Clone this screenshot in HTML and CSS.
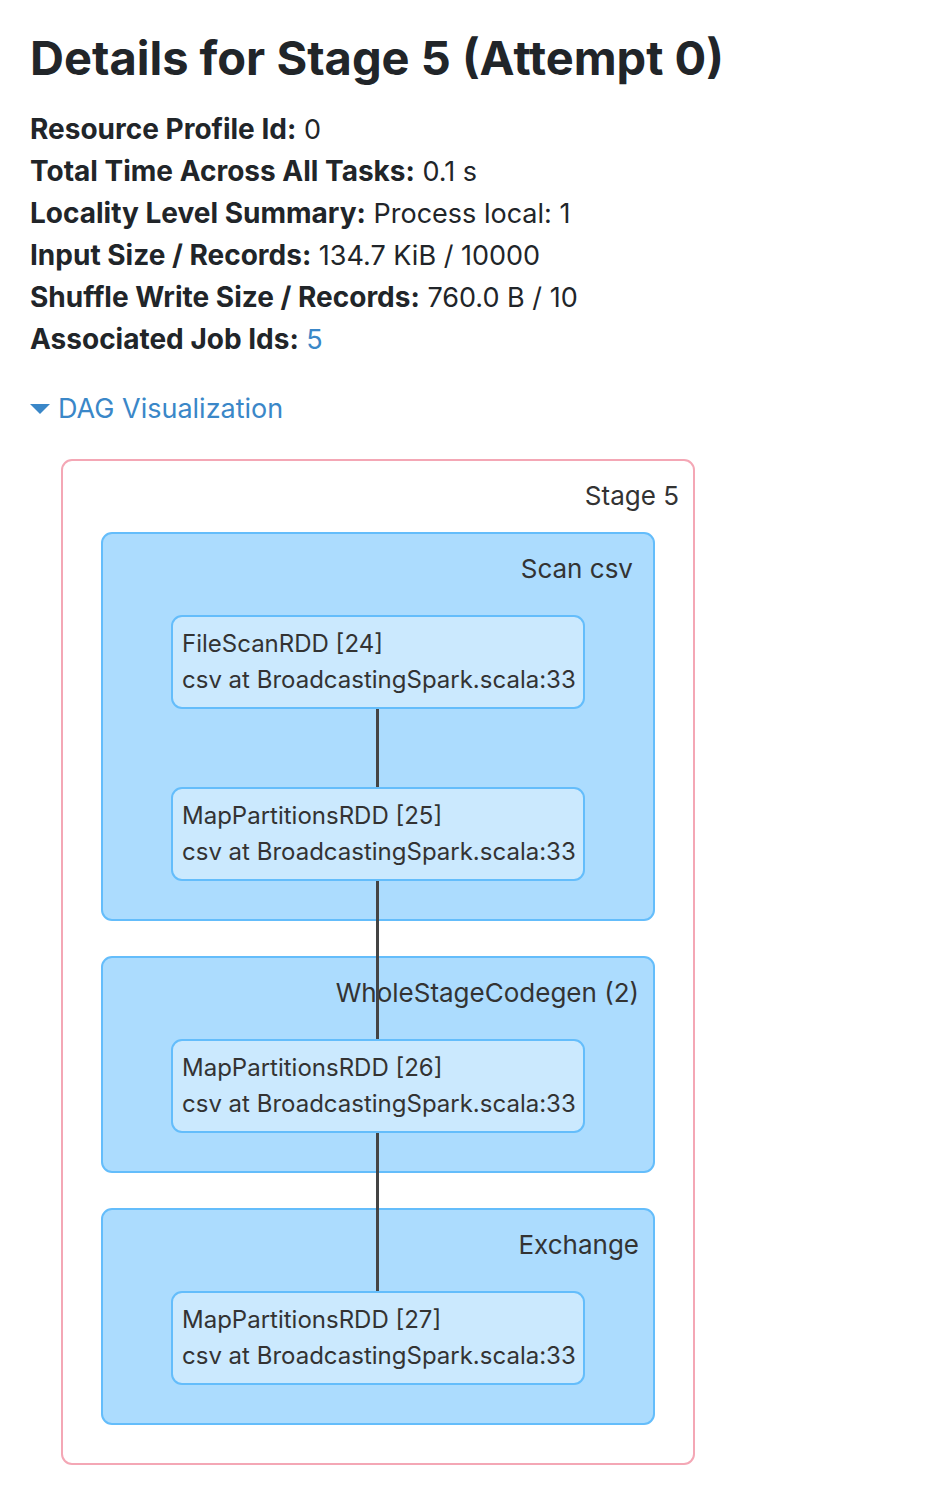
FILE: index.html
```html
<!DOCTYPE html>
<html lang="en">
<head>
<meta charset="utf-8">
<meta name="viewport" content="width=device-width, initial-scale=1">
<title>Details for Stage 5 (Attempt 0)</title>
<link rel="stylesheet" href="styles.css">
</head>
<body>
<main class="page">
  <h1 class="title">Details for Stage 5 (Attempt 0)</h1>
  <ul class="summary">
    <li><strong>Resource Profile Id:</strong> 0</li>
    <li><strong>Total Time Across All Tasks:</strong> 0.1 s</li>
    <li><strong>Locality Level Summary:</strong> Process local: 1</li>
    <li><strong>Input Size / Records:</strong> 134.7 KiB / 10000</li>
    <li><strong>Shuffle Write Size / Records:</strong> 760.0 B / 10</li>
    <li><strong>Associated Job Ids:</strong> <a class="link" href="#job-5">5</a></li>
  </ul>
  <a class="link toggle" href="#dag"><svg class="caret" viewBox="0 0 20 10" aria-hidden="true"><path d="M0 0H20L10 10Z"/></svg>DAG Visualization</a>
  <section class="stage" id="dag">
    <h2 class="label">Stage 5</h2>
    <div class="clusters">
      <section class="cluster">
        <h3 class="label label-inset">Scan csv</h3>
        <div class="nodes">
          <div class="node"><p>FileScanRDD [24]</p><p>csv at BroadcastingSpark.scala:33</p></div>
          <div class="node edge-short"><p>MapPartitionsRDD [25]</p><p>csv at BroadcastingSpark.scala:33</p></div>
        </div>
      </section>
      <section class="cluster">
        <h3 class="label">WholeStageCodegen (2)</h3>
        <div class="nodes">
          <div class="node edge-long"><p>MapPartitionsRDD [26]</p><p>csv at BroadcastingSpark.scala:33</p></div>
        </div>
      </section>
      <section class="cluster">
        <h3 class="label">Exchange</h3>
        <div class="nodes">
          <div class="node edge-long"><p>MapPartitionsRDD [27]</p><p>csv at BroadcastingSpark.scala:33</p></div>
        </div>
      </section>
    </div>
  </section>
</main>
</body>
</html>
```
FILE: styles.css
```css
* {
  box-sizing: border-box;
}

body {
  margin: 0;
  background: #fff;
  color: #212529;
  font-family: Inter, "Liberation Sans", sans-serif;
  font-size: 27px;
  line-height: 42px;
}

h1, h2, h3, p, ul {
  margin: 0;
  padding: 0;
}

.page {
  padding: 30px 30px 41px;
}

.title {
  margin-bottom: 22px;
  font-size: 47px;
  font-weight: 700;
  line-height: 56px;
}

.summary {
  margin-bottom: 28px;
  list-style: none;
}

.summary li {
  height: 42px;
}

.summary strong {
  font-size: 28px;
  font-weight: 700;
}

.link {
  color: #3a87c8;
  text-decoration: none;
}

.toggle {
  display: flex;
  align-items: center;
  gap: 8px;
  width: fit-content;
}

.caret {
  width: 20px;
  height: 10px;
  fill: currentColor;
}

.stage {
  max-width: 634px;
  margin: 29px 0 0 31px;
  padding: 17px 0 38px;
  border: 2px solid #f4a7b5;
  border-radius: 11px;
  color: #333;
}

.label {
  padding-right: 14px;
  font-size: 26px;
  font-weight: 400;
  line-height: 36px;
  text-align: right;
}

.label-inset {
  padding-right: 20px;
}

.clusters {
  display: flex;
  flex-direction: column;
  gap: 35px;
  padding: 18px 38px 0;
}

.cluster {
  padding: 17px 0 38px;
  border: 2px solid #64bdfb;
  border-radius: 11px;
  background: #acdcfe;
}

.nodes {
  display: flex;
  flex-direction: column;
  gap: 78px;
  padding: 28px 68px 0;
}

.node {
  position: relative;
  padding: 9px;
  border: 2px solid #64bdfb;
  border-radius: 11px;
  background: #cbe9fe;
  font-size: 24px;
  line-height: 36px;
  white-space: nowrap;
}

.edge-short::before,
.edge-long::before {
  content: "";
  position: absolute;
  bottom: calc(100% + 2px);
  left: calc(50% - 2px);
  width: 3px;
  background: #444;
}

.edge-short::before {
  height: 78px;
}

.edge-long::before {
  height: 158px;
}
```
